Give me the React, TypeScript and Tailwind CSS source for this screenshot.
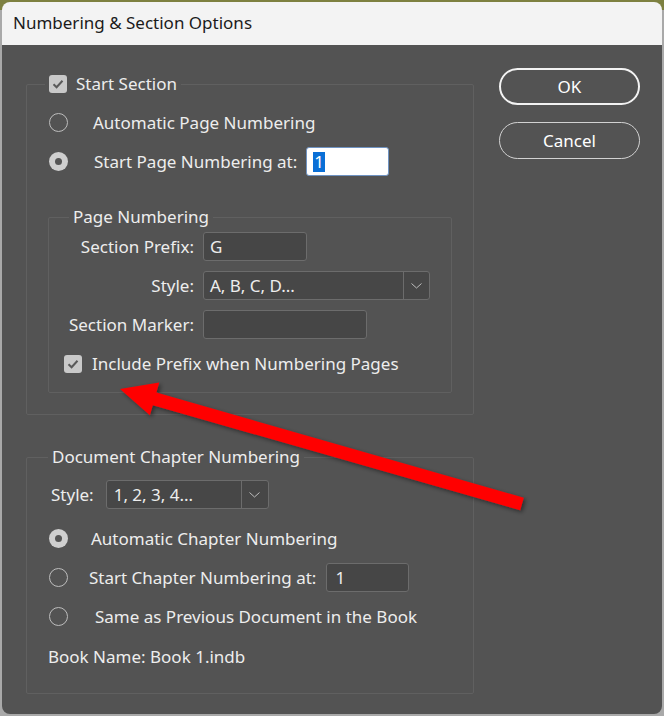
import React from "react";

const font = { fontFamily: '"Noto Sans", "Open Sans", sans-serif' };

function Check() {
  return (
    <span className="flex h-[18px] w-[18px] shrink-0 items-center justify-center rounded-[3px] bg-[#c9c9c9]">
      <svg width="12" height="10" viewBox="0 0 12 10">
        <polyline points="1.5,5.2 4.6,8.2 10.5,1.8" fill="none" stroke="#5a5a5a" strokeWidth="2" />
      </svg>
    </span>
  );
}

function Radio({ on }: { on?: boolean }) {
  return on ? (
    <span className="flex h-[19px] w-[19px] shrink-0 items-center justify-center rounded-full bg-[#cfcfcf]">
      <span className="h-[7px] w-[7px] rounded-full bg-[#555555]" />
    </span>
  ) : (
    <span className="h-[19px] w-[19px] shrink-0 rounded-full border-[1.5px] border-[#bdbdbd]" />
  );
}

function Chevron() {
  return (
    <svg width="11" height="6" viewBox="0 0 11 6">
      <polyline points="0.5,0.5 5.5,5 10.5,0.5" fill="none" stroke="#bdbdbd" strokeWidth="1" />
    </svg>
  );
}

export default function App() {
  return (
    <div className="relative h-[716px] w-[664px] overflow-hidden bg-[#a9a9a9] p-[2px]" style={font}>
      <div className="absolute left-0 right-0 top-0 h-[10px] bg-[#7d8040]" />
      <div className="relative flex h-full w-full flex-col overflow-hidden rounded-[8px] text-[17px] text-[#ededed]">
        <div className="flex h-[43px] shrink-0 items-center bg-[#f3f3f3] pl-[11px] pb-[2px] text-[17px] text-[#1b1b1b]">
          Numbering &amp; Section Options
        </div>
        <div className="flex flex-1 bg-[#535353]">
          <div className="w-[472px] shrink-0 pl-[24px]">
            {/* Start Section */}
            <fieldset className="mt-[27px] w-[448px] rounded-[2px] border border-[#606060] px-[21px] pb-[21px]">
              <legend className="ml-[-3px] flex h-[24px] items-center gap-[9px] px-[4px]">
                <Check />
                <span>Start Section</span>
              </legend>
              <div className="pt-[7px]">
                <div className="flex h-[39px] items-center pl-[1px]">
                  <Radio />
                  <span className="ml-[25px]">Automatic Page Numbering</span>
                </div>
                <div className="flex h-[39px] items-center pl-[1px]">
                  <Radio on />
                  <span className="ml-[26px]">Start Page Numbering at:</span>
                  <div className="ml-[9px] flex h-[29px] w-[83px] items-center rounded-[3px] border border-[#6f93c2] bg-white pl-[6px]">
                    <span className="bg-[#0a6fd6] px-[1px] leading-[20px] text-white">1</span>
                  </div>
                </div>
              </div>
              {/* Page Numbering */}
              <fieldset className="mt-[24px] rounded-[2px] border border-[#606060] pb-[14px]">
                <legend className="ml-[20px] flex h-[24px] items-center px-[4px]">Page Numbering</legend>
                <div className="flex flex-col gap-[10px] pt-[3px]">
                  <div className="flex h-[29px] items-center">
                    <span className="w-[145px] text-right">Section Prefix:</span>
                    <div className="ml-[9px] flex h-[29px] w-[104px] items-center rounded-[3px] border border-[#6c6c6c] bg-[#464646] pl-[6px]">
                      G
                    </div>
                  </div>
                  <div className="flex h-[29px] items-center">
                    <span className="w-[145px] text-right">Style:</span>
                    <div className="ml-[9px] flex h-[29px] w-[227px] items-stretch rounded-[3px] border border-[#6c6c6c] bg-[#474747]">
                      <span className="flex flex-1 items-center pl-[6px]">A, B, C, D...</span>
                      <span className="flex w-[26px] items-center justify-center border-l border-[#6c6c6c]">
                        <Chevron />
                      </span>
                    </div>
                  </div>
                  <div className="flex h-[29px] items-center">
                    <span className="w-[145px] text-right">Section Marker:</span>
                    <div className="ml-[9px] h-[29px] w-[164px] rounded-[3px] border border-[#6c6c6c] bg-[#464646]" />
                  </div>
                  <div className="flex h-[29px] items-center pl-[15px]">
                    <Check />
                    <span className="ml-[10px]">Include Prefix when Numbering Pages</span>
                  </div>
                </div>
              </fieldset>
            </fieldset>

            {/* Document Chapter Numbering */}
            <fieldset className="mt-[30px] w-[448px] rounded-[2px] border border-[#606060] pb-[16px]">
              <legend className="ml-[21px] flex h-[24px] items-center px-[4px]">Document Chapter Numbering</legend>
              <div className="mt-[11px] flex h-[29px] items-center pl-[24px]">
                <span>Style:</span>
                <div className="ml-[12px] flex h-[29px] w-[163px] items-stretch rounded-[3px] border border-[#6c6c6c] bg-[#474747]">
                  <span className="flex flex-1 items-center pl-[7px]">1, 2, 3, 4...</span>
                  <span className="flex w-[27px] items-center justify-center border-l border-[#6c6c6c]">
                    <Chevron />
                  </span>
                </div>
              </div>
              <div className="mt-[10px] pl-[22px]">
                <div className="flex h-[39px] items-center">
                  <Radio on />
                  <span className="ml-[23px]">Automatic Chapter Numbering</span>
                </div>
                <div className="flex h-[39px] items-center">
                  <Radio />
                  <span className="ml-[21px]">Start Chapter Numbering at:</span>
                  <div className="ml-[10px] flex h-[29px] w-[83px] items-center rounded-[3px] border border-[#6c6c6c] bg-[#464646] pl-[8px]">
                    1
                  </div>
                </div>
                <div className="flex h-[39px] items-center">
                  <Radio />
                  <span className="ml-[27px]">Same as Previous Document in the Book</span>
                </div>
              </div>
              <div className="flex h-[41px] items-center pl-[21px] pt-[1px]">Book Name: Book 1.indb</div>
            </fieldset>
          </div>

          {/* Buttons */}
          <div className="ml-[25px] flex flex-col gap-[17px] pt-[23px]">
            <button className="flex h-[37px] w-[141px] items-center justify-center rounded-full border-[2.5px] border-[#f2f2f2] pt-[1px] text-[17px] text-white">
              OK
            </button>
            <button className="flex h-[37px] w-[141px] items-center justify-center rounded-full border border-[#d2d2d2] pt-[1px] text-[17px] text-white">
              Cancel
            </button>
          </div>
        </div>
      </div>

      {/* Red annotation arrow */}
      <svg className="pointer-events-none absolute left-0 top-0" width="664" height="716" viewBox="0 0 664 716">
        <defs>
          <filter id="sh" x="-10%" y="-10%" width="120%" height="130%">
            <feDropShadow dx="2" dy="2" stdDeviation="2" floodColor="#000" floodOpacity="0.45" />
          </filter>
        </defs>
        <polygon
          points="120,389 159.3,382.6 156.4,392.6 523.8,497.7 520.2,510.3 152.8,405.2 149.9,415.3"
          fill="#ff0000"
          filter="url(#sh)"
        />
      </svg>
    </div>
  );
}
